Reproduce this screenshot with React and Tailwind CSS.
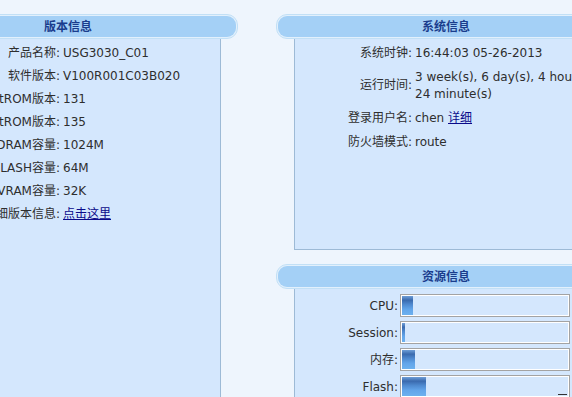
import React from "react";

const versionRows = [
  ["产品名称:", "USG3030_C01"],
  ["软件版本:", "V100R001C03B020"],
  ["BootROM版本:", "131"],
  ["ExtROM版本:", "135"],
  ["DRAM容量:", "1024M"],
  ["FLASH容量:", "64M"],
  ["NVRAM容量:", "32K"],
];

const resources = [
  { label: "CPU:", width: 11 },
  { label: "Session:", width: 3 },
  { label: "内存:", width: 13 },
  { label: "Flash:", width: 24, mark: true },
];

function Header({ title }) {
  return (
    <div className="h-[25px] shrink-0 rounded-[11px] border border-[#c2e0f6] bg-[#e2f0fc] p-px">
      <div className="flex h-full items-center justify-center rounded-[9px] bg-[#a4d0f6] text-[12px] font-bold text-[#1a3d8d]">
        {title}
      </div>
    </div>
  );
}

function Link({ children }) {
  return <span className="text-[#0a0a8a] underline">{children}</span>;
}

export default function App() {
  return (
    <div className="flex h-[397px] w-[572px] gap-[38px] overflow-hidden bg-[#eef5fd] pt-[14px] font-['DejaVu_Sans','Noto_Sans_CJK_SC',sans-serif] text-[12px] text-[#2e2e2e]">
      {/* 版本信息 */}
      <div className="ml-[-102px] flex w-[340px] shrink-0 flex-col">
        <Header title="版本信息" />
        <div className="mx-[17px] h-[380px] shrink-0 border-x border-[#9dbad6] bg-[#d4e7fd] pt-[2px]">
          {versionRows.map(([label, value]) => (
            <div key={label} className="flex h-[23px] items-center">
              <div className="w-[144px] shrink-0 whitespace-nowrap text-right">
                {label}
              </div>
              <div className="whitespace-nowrap pl-[3px]">{value}</div>
            </div>
          ))}
          <div className="flex h-[23px] items-center">
            <div className="w-[144px] shrink-0 whitespace-nowrap text-right">
              详细版本信息:
            </div>
            <div className="whitespace-nowrap pl-[3px]">
              <Link>点击这里</Link>
            </div>
          </div>
        </div>
      </div>

      {/* 系统信息 + 资源信息 */}
      <div className="flex w-[340px] shrink-0 flex-col">
        <Header title="系统信息" />
        <div className="ml-[18px] mr-[17px] h-[211px] shrink-0 border-x border-b border-[#9dbad6] bg-[#d4e7fd] pt-[2px]">
          <div className="flex items-center py-[3.5px] leading-[17px]">
            <div className="w-[117px] shrink-0 whitespace-nowrap text-right">系统时钟:</div>
            <div className="whitespace-nowrap pl-[3px]">16:44:03 05-26-2013</div>
          </div>
          <div className="flex items-center py-[3.5px] leading-[17px]">
            <div className="w-[117px] shrink-0 whitespace-nowrap text-right">运行时间:</div>
            <div className="whitespace-nowrap pl-[3px]">
              3 week(s), 6 day(s), 4 hour(s),
              <br />
              24 minute(s)
            </div>
          </div>
          <div className="flex items-center py-[3.5px] leading-[17px]">
            <div className="w-[117px] shrink-0 whitespace-nowrap text-right">登录用户名:</div>
            <div className="whitespace-nowrap pl-[3px]">
              chen <Link>详细</Link>
            </div>
          </div>
          <div className="flex items-center py-[3.5px] leading-[17px]">
            <div className="w-[117px] shrink-0 whitespace-nowrap text-right">防火墙模式:</div>
            <div className="whitespace-nowrap pl-[3px]">route</div>
          </div>
        </div>

        <div className="mt-[14px]">
          <Header title="资源信息" />
        </div>
        <div className="ml-[18px] mr-[17px] h-[200px] shrink-0 border-x border-[#9dbad6] bg-[#d4e7fd] pt-[3px]">
          {resources.map((r) => (
            <div key={r.label} className="flex h-[27px] items-center">
              <div className="w-[103px] shrink-0 whitespace-nowrap text-right">{r.label}</div>
              <div className="ml-[2px] h-[23px] w-[170px] shrink-0 border border-[#a3a3a3]">
                <div className="flex h-full border border-white">
                  <div
                    className="h-full bg-[linear-gradient(180deg,#6f9fd8_0%,#3a6aae_22%,#4f8ad0_45%,#62a5ea_70%,#6cb1ef_100%)]"
                    style={{ width: r.width }}
                  />
                  {r.mark && (
                    <div className="mb-[1px] ml-auto mr-[1px] h-px w-[9px] self-end bg-[#333]" />
                  )}
                </div>
              </div>
            </div>
          ))}
        </div>
      </div>
    </div>
  );
}
